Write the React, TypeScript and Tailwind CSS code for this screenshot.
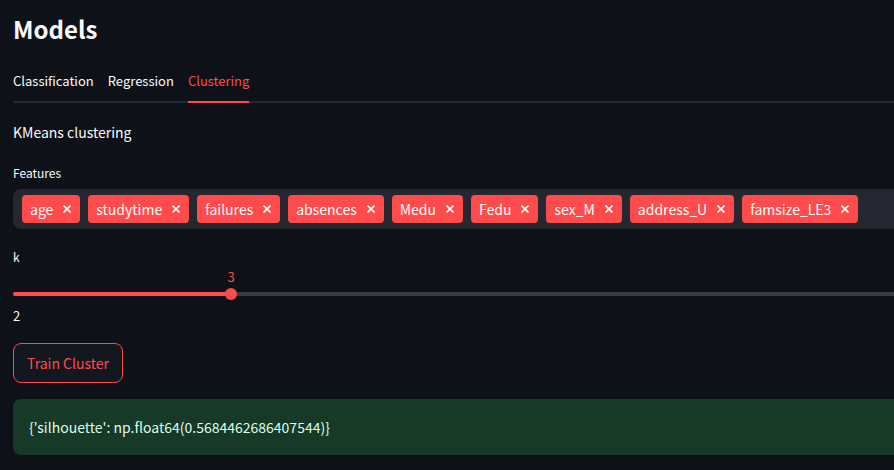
import { useState } from "react";

const TABS = ["Classification", "Regression", "Clustering"];

const FEATURES = [
  "age",
  "studytime",
  "failures",
  "absences",
  "Medu",
  "Fedu",
  "sex_M",
  "address_U",
  "famsize_LE3",
];

const K_MIN = 2;
const K_MAX = 10;

function CloseIcon() {
  return (
    <svg viewBox="0 0 8 8" className="size-2" fill="none" stroke="currentColor" strokeWidth="1.6" aria-hidden="true">
      <path d="M0.5 0.5 7.5 7.5M7.5 0.5 0.5 7.5" />
    </svg>
  );
}

function Tabs({ active, onSelect }: { active: string; onSelect: (tab: string) => void }) {
  return (
    <div role="tablist" className="flex h-[42px] gap-[14px] border-b-2 border-[#262730]">
      {TABS.map((tab) => (
        <button
          key={tab}
          type="button"
          role="tab"
          aria-selected={tab === active}
          onClick={() => onSelect(tab)}
          className={
            tab === active
              ? "-mb-0.5 border-b-2 border-[#ff4b4b] text-[13px] text-[#ff4b4b]"
              : "-mb-0.5 border-b-2 border-transparent text-[13px]"
          }
        >
          {tab}
        </button>
      ))}
    </div>
  );
}

function FeatureSelect() {
  const [selected, setSelected] = useState(FEATURES);
  return (
    <div role="group" aria-labelledby="features-label">
      <p id="features-label" className="text-xs leading-6">
        Features
      </p>
      <ul className="mt-1 flex h-10 items-center gap-2 overflow-hidden rounded-l-lg bg-[#262730] px-[9px]">
        {selected.map((name) => (
          <li key={name} className="flex h-7 shrink-0 items-center rounded bg-[#ff4b4b] pl-2 text-sm text-white">
            {name}
            <button
              type="button"
              aria-label={`Remove ${name}`}
              onClick={() => setSelected(selected.filter((item) => item !== name))}
              className="flex h-7 items-center pr-[9px] pl-[10px]"
            >
              <CloseIcon />
            </button>
          </li>
        ))}
      </ul>
    </div>
  );
}

function KSlider() {
  const [k, setK] = useState(3);
  const percent = ((k - K_MIN) / (K_MAX - K_MIN)) * 100;
  return (
    <div className="w-[198%]">
      <label htmlFor="k" className="block text-xs leading-6">
        k
      </label>
      <div className="relative mt-[19px] h-3">
        <div className="flex h-full items-center">
          <div className="h-1 w-full overflow-hidden rounded-full bg-[#393b44]">
            <div className="h-full bg-[#ff4b4b]" style={{ width: `${percent}%` }} />
          </div>
        </div>
        <input
          id="k"
          type="range"
          min={K_MIN}
          max={K_MAX}
          value={k}
          onChange={(event) => setK(Number(event.target.value))}
          className="absolute inset-0 z-10 m-0 w-full cursor-pointer opacity-0"
        />
        <span
          className="absolute top-0 size-3 -translate-x-1/2 rounded-full bg-[#ff4b4b]"
          style={{ left: `${percent}%` }}
        />
        <output
          htmlFor="k"
          className="absolute bottom-full -translate-x-1/2 text-[13px] leading-[22px] text-[#ff4b4b]"
          style={{ left: `${percent}%` }}
        >
          {k}
        </output>
      </div>
      <p className="mt-1 text-[13px] leading-6">{K_MIN}</p>
    </div>
  );
}

export default function App() {
  const [tab, setTab] = useState("Clustering");
  return (
    <main className="min-h-screen overflow-x-hidden bg-[#0e1117] pt-[7px] pb-[15px] pl-[13px] font-['Noto_Sans_CJK_SC','Noto_Sans',sans-serif] text-[#fafafa]">
      <h1 className="text-2xl leading-[44px] font-bold">Models</h1>
      <div className="mt-[10px]">
        <Tabs active={tab} onSelect={setTab} />
      </div>
      <p className="mt-[17px] text-sm leading-6">KMeans clustering</p>
      <div className="mt-[17px]">
        <FeatureSelect />
      </div>
      <div className="mt-4">
        <KSlider />
      </div>
      <button
        type="button"
        className="mt-[15px] flex h-10 items-center rounded-lg border border-[#ff4b4b] bg-[#131720] px-[13px] text-sm text-[#ff4b4b]"
      >
        Train Cluster
      </button>
      <div role="status" className="mt-4 rounded-l-lg bg-[#173928] p-4 text-sm leading-6 text-[#dffde9]">
        {"{'silhouette': np.float64(0.5684462686407544)}"}
      </div>
    </main>
  );
}
